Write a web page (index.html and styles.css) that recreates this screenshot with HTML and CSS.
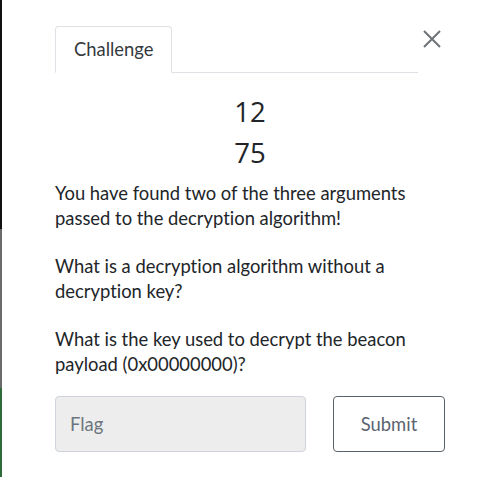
FILE: index.html
```html
<!DOCTYPE html>
<html>
<head>
<meta charset="utf-8">
<link rel="stylesheet" href="styles.css">
</head>
<body>
<div class="page">
  <div class="edge">
    <span class="edge-dark"></span>
    <span class="edge-gray"></span>
    <span class="edge-green"></span>
  </div>
  <div class="modal">
    <div class="header">
      <div class="tabs">
        <div class="tab">Challenge</div>
      </div>
      <button class="close" aria-label="Close">
        <svg width="18" height="18" viewBox="0 0 18 18"><path d="M1 1L17 17M17 1L1 17" stroke="#6f7377" stroke-width="2" fill="none"/></svg>
      </button>
    </div>
    <h3 class="name">12</h3>
    <h4 class="value">75</h4>
    <div class="desc">
      <p>You have found two of the three arguments passed to the decryption algorithm!</p>
      <p>What is a decryption algorithm without a decryption key?</p>
      <p>What is the key used to decrypt the beacon payload (0x00000000)?</p>
    </div>
    <form class="submit-row">
      <input class="flag" type="text" placeholder="Flag">
      <button class="submit" type="button">Submit</button>
    </form>
  </div>
</div>
</body>
</html>
```
FILE: styles.css
```css
html, body {
  margin: 0;
  padding: 0;
  background: #fff;
}
body {
  font-family: Lato, "Noto Sans", sans-serif;
  font-variant-ligatures: none;
  color: #212529;
}
.page {
  display: flex;
  height: 479px;
  overflow: hidden;
}
.edge {
  width: 2px;
  display: flex;
  flex-direction: column;
  padding-bottom: 2px;
}
.edge-dark { height: 229px; background: #111; }
.edge-gray { height: 159px; background: #6b6b6b; }
.edge-green { flex: 1; background: #2f6a3a; }
.modal {
  flex: 1;
  padding: 26px 51px 0 53px;
}
.header {
  display: flex;
  align-items: flex-start;
}
.tabs {
  flex: 1;
  border-bottom: 1px solid #dee2e6;
  display: flex;
}
.tab {
  border: 1px solid #dee2e6;
  border-bottom-color: #fff;
  border-radius: 4px 4px 0 0;
  margin-bottom: -1px;
  padding: 11px 18px 12px 18px;
  font-size: 18.4px;
  line-height: 22px;
  color: #343a40;
}
.close {
  width: 27px;
  height: 40px;
  border: 0;
  background: none;
  padding: 0;
  margin: 4px 0 0 0;
  display: flex;
  justify-content: flex-end;
  align-items: flex-start;
  cursor: pointer;
}
.close svg { display: block; margin: 0 4px 0 0; }
.name, .value {
  text-align: center;
  font-family: "Open Sans", "Noto Sans", sans-serif;
  font-weight: 400;
  font-size: 27.5px;
  line-height: 30px;
  margin: 0;
  color: #212529;
}
.name { margin-top: 24px; }
.value { margin-top: 11px; }
.desc {
  margin-top: 13px;
  font-size: 18.4px;
  line-height: 25px;
  color: #212529;
}
.desc p { margin: 0 0 23px 0; }
.desc p:last-child { margin-bottom: 0; }
.submit-row {
  display: flex;
  gap: 27px;
  margin-top: 19px;
}
.flag {
  width: 251px;
  height: 56px;
  box-sizing: border-box;
  background: #ededed;
  border: 1px solid #ced4da;
  border-radius: 4px;
  padding: 0 14px;
  font-family: Lato, "Noto Sans", sans-serif;
  font-size: 18.4px;
  color: #495057;
}
.flag::placeholder { color: #6c757d; }
.submit {
  width: 112px;
  height: 56px;
  background: #fff;
  border: 1px solid #5a636b;
  border-radius: 4px;
  font-family: Lato, "Noto Sans", sans-serif;
  font-size: 18.4px;
  color: #5a6370;
  cursor: pointer;
}
```
